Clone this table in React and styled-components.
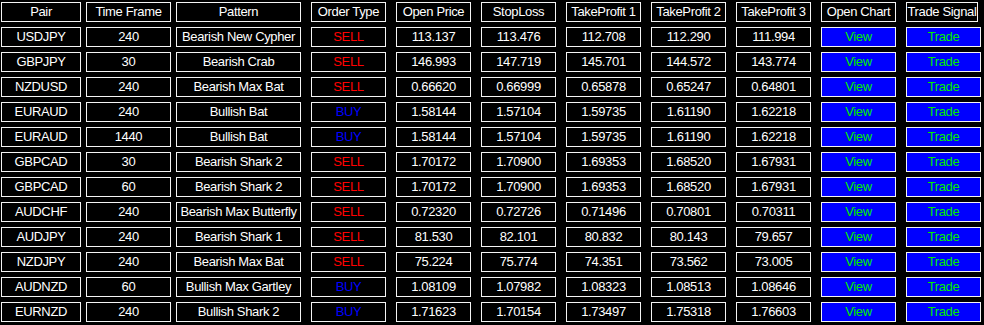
import React from "react";
import styled, { createGlobalStyle } from "styled-components";

const Global = createGlobalStyle`
  html, body { margin: 0; padding: 0; background: #000; }
  body { width: 984px; height: 325px; overflow: hidden; font-family: "Liberation Sans", Arial, sans-serif; }
`;

const Board = styled.div`
  display: flex;
  flex-direction: column;
  gap: 5px;
  padding: 2px 0 0 1px;
  background: #000;
  width: 984px;
  height: 325px;
  box-sizing: border-box;
`;

const Row = styled.div`
  display: flex;
  align-items: center;
`;

const Cell = styled.div`
  box-sizing: border-box;
  width: ${(p) => p.$w}px;
  margin-left: ${(p) => p.$ml}px;
  height: 20px;
  border: 1px solid #f4f4f4;
  background: ${(p) => (p.$button ? "#0000ff" : "#000")};
  color: ${(p) => p.$color || "#fff"};
  font-size: 13px;
  letter-spacing: -0.35px;
  line-height: 18px;
  text-align: center;
  white-space: nowrap;
  overflow: hidden;
  flex: none;
`;

const columns = [
  { title: "Pair", w: 80, ml: 0 },
  { title: "Time Frame", w: 85, ml: 5 },
  { title: "Pattern", w: 125, ml: 5 },
  { title: "Order Type", w: 75, ml: 10 },
  { title: "Open Price", w: 75, ml: 10 },
  { title: "StopLoss", w: 75, ml: 10 },
  { title: "TakeProfit 1", w: 75, ml: 10 },
  { title: "TakeProfit 2", w: 75, ml: 10 },
  { title: "TakeProfit 3", w: 75, ml: 10 },
  { title: "Open Chart", w: 75, ml: 10 },
  { title: "Trade Signal", w: 72, ml: 10, bodyW: 75 },
];

const data = [
  ["USDJPY", "240", "Bearish New Cypher", "SELL", "113.137", "113.476", "112.708", "112.290", "111.994"],
  ["GBPJPY", "30", "Bearish Crab", "SELL", "146.993", "147.719", "145.701", "144.572", "143.774"],
  ["NZDUSD", "240", "Bearish Max Bat", "SELL", "0.66620", "0.66999", "0.65878", "0.65247", "0.64801"],
  ["EURAUD", "240", "Bullish Bat", "BUY", "1.58144", "1.57104", "1.59735", "1.61190", "1.62218"],
  ["EURAUD", "1440", "Bullish Bat", "BUY", "1.58144", "1.57104", "1.59735", "1.61190", "1.62218"],
  ["GBPCAD", "30", "Bearish Shark 2", "SELL", "1.70172", "1.70900", "1.69353", "1.68520", "1.67931"],
  ["GBPCAD", "60", "Bearish Shark 2", "SELL", "1.70172", "1.70900", "1.69353", "1.68520", "1.67931"],
  ["AUDCHF", "240", "Bearish Max Butterfly", "SELL", "0.72320", "0.72726", "0.71496", "0.70801", "0.70311"],
  ["AUDJPY", "240", "Bearish Shark 1", "SELL", "81.530", "82.101", "80.832", "80.143", "79.657"],
  ["NZDJPY", "240", "Bearish Max Bat", "SELL", "75.224", "75.774", "74.351", "73.562", "73.005"],
  ["AUDNZD", "60", "Bullish Max Gartley", "BUY", "1.08109", "1.07982", "1.08323", "1.08513", "1.08646"],
  ["EURNZD", "240", "Bullish Shark 2", "BUY", "1.71623", "1.70154", "1.73497", "1.75318", "1.76603"],
];

export default function App() {
  return (
    <>
      <Global />
      <Board>
        <Row>
          {columns.map((c) => (
            <Cell key={c.title} $w={c.w} $ml={c.ml}>
              {c.title}
            </Cell>
          ))}
        </Row>
        {data.map((r, i) => (
          <Row key={i}>
            {r.map((v, j) => (
              <Cell
                key={j}
                $w={columns[j].w}
                $ml={columns[j].ml}
                $color={j === 3 ? (v === "SELL" ? "#ff0000" : "#0000ff") : undefined}
              >
                {v}
              </Cell>
            ))}
            <Cell $w={columns[9].w} $ml={columns[9].ml} $button $color="#00ee00">
              View
            </Cell>
            <Cell $w={columns[10].bodyW} $ml={columns[10].ml} $button $color="#00ee00">
              Trade
            </Cell>
          </Row>
        ))}
      </Board>
    </>
  );
}
